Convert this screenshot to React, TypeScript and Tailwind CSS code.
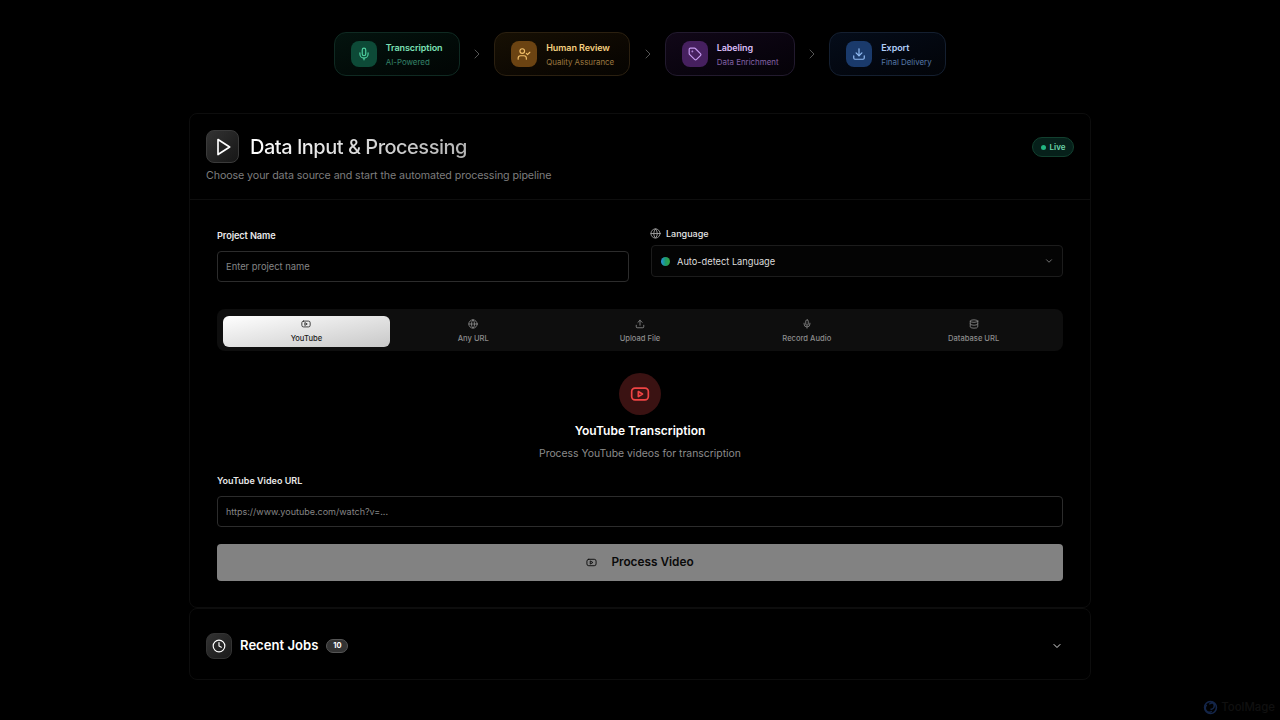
import { ChevronDown, ChevronRight, Clock, Database, Download, Globe, Mic, Tag, Upload, UserCheck } from 'lucide-react'
import type { LucideIcon } from 'lucide-react'

const steps: {
  title: string
  sub: string
  icon: LucideIcon
  box: string
  iconBox: string
  iconColor: string
  titleColor: string
  subColor: string
}[] = [
  {
    title: 'Transcription',
    sub: 'AI-Powered',
    icon: Mic,
    box: 'w-[126px] border-[#0f2a22] bg-gradient-to-br from-[#04140f] to-[#010504]',
    iconBox: 'bg-[#0d4a37]',
    iconColor: 'text-[#4fd1a0]',
    titleColor: 'text-[#7ce0b6]',
    subColor: 'text-[#358469]',
  },
  {
    title: 'Human Review',
    sub: 'Quality Assurance',
    icon: UserCheck,
    box: 'w-[136px] border-[#2b2010] bg-gradient-to-br from-[#171004] to-[#060401]',
    iconBox: 'bg-[#6b4312]',
    iconColor: 'text-[#f3c06a]',
    titleColor: 'text-[#f5d080]',
    subColor: 'text-[#9c7840]',
  },
  {
    title: 'Labeling',
    sub: 'Data Enrichment',
    icon: Tag,
    box: 'w-[130px] border-[#221a2e] bg-gradient-to-br from-[#110818] to-[#050208]',
    iconBox: 'bg-[#46205f]',
    iconColor: 'text-[#c79bf0]',
    titleColor: 'text-[#d8bcf5]',
    subColor: 'text-[#8462a6]',
  },
  {
    title: 'Export',
    sub: 'Final Delivery',
    icon: Download,
    box: 'w-[117px] border-[#141f30] bg-gradient-to-br from-[#050d1a] to-[#020408]',
    iconBox: 'bg-[#1a3a6b]',
    iconColor: 'text-[#93bdf5]',
    titleColor: 'text-[#b0ccf7]',
    subColor: 'text-[#5678a6]',
  },
]

function YoutubeIcon({ className }: { className: string }) {
  return (
    <svg viewBox="0 0 24 24" fill="none" stroke="currentColor" strokeWidth="2" strokeLinecap="round" strokeLinejoin="round" className={className}>
      <rect x="2" y="5" width="20" height="14" rx="4" />
      <path d="m10 9 5 3-5 3z" />
    </svg>
  )
}

const tabs: { label: string; icon: LucideIcon | typeof YoutubeIcon }[] = [
  { label: 'YouTube', icon: YoutubeIcon },
  { label: 'Any URL', icon: Globe },
  { label: 'Upload File', icon: Upload },
  { label: 'Record Audio', icon: Mic },
  { label: 'Database URL', icon: Database },
]

export default function App() {
  return (
    <div className="relative h-[720px] overflow-hidden bg-black font-['Inter',sans-serif] text-white">
      {/* Pipeline steps */}
      <div className="flex items-center justify-center pt-8">
        {steps.map((s, i) => (
          <div key={s.title} className="flex items-center">
            {i > 0 && <ChevronRight className="mx-[9.25px] h-4 w-4 text-[#555555]" strokeWidth={1.5} />}
            <div className={`flex h-11 items-center gap-[9px] rounded-xl border pl-4 ${s.box}`}>
              <div className={`flex h-[26px] w-[26px] items-center justify-center rounded-lg ${s.iconBox}`}>
                <s.icon className={`h-[14px] w-[14px] ${s.iconColor}`} />
              </div>
              <div className="pt-[2px] whitespace-nowrap">
                <div className={`text-[9px] leading-[14px] font-semibold tracking-[-0.01em] ${s.titleColor}`}>{s.title}</div>
                <div className={`text-[7.9px] leading-[14px] ${s.subColor}`}>{s.sub}</div>
              </div>
            </div>
          </div>
        ))}
      </div>

      <div className="mx-auto mt-[37px] w-[902px]">
        {/* Main card */}
        <div className="h-[495px] rounded-lg border border-[#0d0d0d] bg-black">
          <div className="h-[86px] border-b border-[#0e0e0e] px-4 pt-4">
            <div className="flex items-start justify-between">
              <div className="flex items-center gap-[11px]">
                <div className="flex h-[33px] w-[33px] items-center justify-center rounded-lg border border-[#3a3a3a] bg-gradient-to-br from-[#333333] to-[#161616]">
                  <svg viewBox="0 0 24 24" fill="none" stroke="white" strokeWidth="2" strokeLinecap="round" strokeLinejoin="round" className="h-5 w-5">
                    <polygon points="6 3 20 12 6 21 6 3" />
                  </svg>
                </div>
                <h1 className="bg-gradient-to-r from-white to-[#b5b5b5] bg-clip-text text-[20px] font-medium tracking-[-0.5px] text-transparent">Data Input &amp; Processing</h1>
              </div>
              <div className="mt-[7px] flex h-5 w-[42px] items-center justify-center gap-1 rounded-full border border-[#12402f] bg-[#06201a]">
                <span className="h-[5px] w-[5px] rounded-full bg-[#22b582]" />
                <span className="text-[8px] font-semibold text-[#6fd6ab]">Live</span>
              </div>
            </div>
            <p className="mt-[5px] text-[10.7px] leading-4 tracking-[-0.1px] text-[#7d7d7d]">Choose your data source and start the automated processing pipeline</p>
          </div>

          <div className="px-[27px] pt-[25px]">
            <div className="grid grid-cols-2 gap-[22px]">
              <div className="pt-[3px]">
                <label className="block text-[9.2px] leading-4 font-semibold tracking-[-0.01em] text-[#e8e8e8]">Project Name</label>
                <div className="mt-[7px] flex h-[31px] items-center rounded border border-[#2c2c2c] bg-black px-2 pt-[1px] text-[9.4px] text-[#858585]">Enter project name</div>
              </div>
              <div>
                <div className="flex h-4 items-center gap-[5px]">
                  <Globe className="-ml-[1px] h-[11px] w-[11px] text-[#a0a0a0]" />
                  <span className="pt-[1px] text-[9px] font-medium text-[#e5e5e5]">Language</span>
                </div>
                <div className="mt-1 flex h-8 items-center justify-between rounded border border-[#1c1c1c] bg-[#040404] pr-[8px] pl-[9px]">
                  <div className="flex items-center gap-[7px]">
                    <span className="h-[9px] w-[9px] rounded-full bg-gradient-to-r from-[#2e8fe0] via-[#1f9a6a] to-[#35a53a]" />
                    <span className="pt-[1px] text-[9.25px] text-[#dddddd]">Auto-detect Language</span>
                  </div>
                  <ChevronDown className="h-[10px] w-[10px] text-[#888888]" />
                </div>
              </div>
            </div>

            {/* Source tabs */}
            <div className="mt-[27px] grid h-[42px] grid-cols-5 rounded-lg bg-[#0e0e0e] px-[6px] pt-[7px]">
              {tabs.map((t, i) => (
                <div
                  key={t.label}
                  className={`flex h-[31px] flex-col items-center justify-center gap-[5px] rounded-md pb-[1px] ${i === 0 ? 'bg-gradient-to-br from-white to-[#c8c8c8] text-[#222222]' : 'text-[#8c8c8c]'}`}
                >
                  <t.icon className="h-[10px] w-[10px]" />
                  <span className="text-[7.6px] leading-[10px] font-medium">{t.label}</span>
                </div>
              ))}
            </div>

            <div className="mt-[22px] flex flex-col items-center">
              <div className="flex h-[42px] w-[42px] items-center justify-center rounded-full bg-[#3a1212]">
                <YoutubeIcon className="h-5 w-5 text-[#ef4444]" />
              </div>
              <h2 className="mt-1 text-[12px] leading-6 font-semibold text-white">YouTube Transcription</h2>
              <p className="mt-[2px] text-[10.4px] leading-[18px] text-[#8c8c8c]">Process YouTube videos for transcription</p>
            </div>

            <label className="mt-[9px] block pt-[1px] text-[9px] leading-4 font-semibold text-[#e8e8e8]">YouTube Video URL</label>
            <div className="mt-[7px] flex h-[31px] items-center rounded border border-[#2c2c2c] bg-black px-2 pt-[1px] text-[9px] text-[#858585]">https://www.youtube.com/watch?v=...</div>

            <div className="mt-[17px] flex h-[37px] items-center justify-center gap-[14px] rounded bg-[#828282] text-[#0a0a0a]">
              <YoutubeIcon className="h-[11px] w-[11px]" />
              <span className="pt-[1px] text-[11.8px] font-semibold">Process Video</span>
            </div>
          </div>
        </div>

        {/* Recent jobs */}
        <div className="flex h-[72px] items-center justify-between rounded-lg border border-[#0d0d0d] bg-black pt-[4px] pr-[27px] pl-4">
          <div className="flex items-center gap-2">
            <div className="flex h-[26px] w-[26px] items-center justify-center rounded-lg border border-[#333333] bg-gradient-to-br from-[#333333] to-[#1a1a1a]">
              <Clock className="h-[14px] w-[14px] text-white" />
            </div>
            <span className="text-[13.1px] font-semibold text-white">Recent Jobs</span>
            <span className="flex h-[14px] w-[22px] items-center justify-center rounded-full border border-[#555555] bg-[#333333] text-[7.5px] font-bold">10</span>
          </div>
          <ChevronDown className="h-3 w-3 text-[#dddddd]" />
        </div>
      </div>

      {/* Watermark */}
      <div className="absolute right-[5px] bottom-[4px] flex items-center gap-[3px]">
        <svg viewBox="0 0 24 24" fill="none" stroke="#14264a" strokeWidth="2.5" className="h-[15px] w-[15px]">
          <circle cx="12" cy="12" r="9.5" />
          <path d="M12 3a6 6 0 0 1 0 12M6 8a6 6 0 0 0 8 10M20 8a6 6 0 0 0-10-1" />
        </svg>
        <span className="text-[11.4px] font-medium text-[#101010]">ToolMage</span>
      </div>
    </div>
  )
}
